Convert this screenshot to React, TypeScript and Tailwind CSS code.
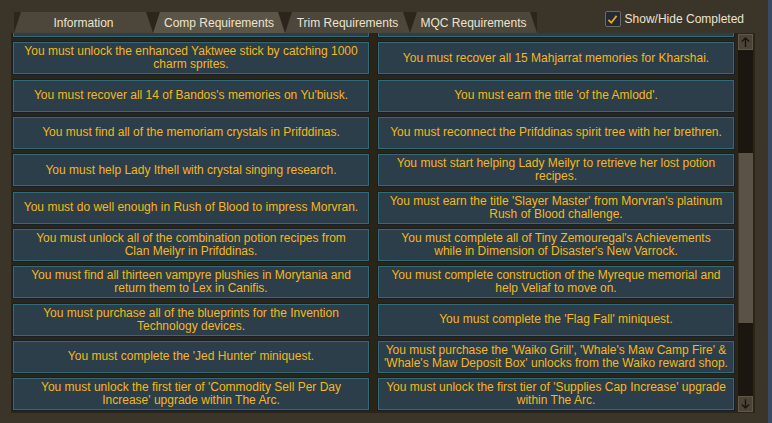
import React from "react";

type Row = [string[], string[]];

const rows: Row[] = [
  [["You must unlock the enhanced Yaktwee stick by catching 1000", "charm sprites."], ["You must recover all 15 Mahjarrat memories for Kharshai."]],
  [["You must recover all 14 of Bandos's memories on Yu'biusk."], ["You must earn the title 'of the Amlodd'."]],
  [["You must find all of the memoriam crystals in Prifddinas."], ["You must reconnect the Prifddinas spirit tree with her brethren."]],
  [["You must help Lady Ithell with crystal singing research."], ["You must start helping Lady Meilyr to retrieve her lost potion", "recipes."]],
  [["You must do well enough in Rush of Blood to impress Morvran."], ["You must earn the title 'Slayer Master' from Morvran's platinum", "Rush of Blood challenge."]],
  [["You must unlock all of the combination potion recipes from", "Clan Meilyr in Prifddinas."], ["You must complete all of Tiny Zemouregal's Achievements", "while in Dimension of Disaster's New Varrock."]],
  [["You must find all thirteen vampyre plushies in Morytania and", "return them to Lex in Canifis."], ["You must complete construction of the Myreque memorial and", "help Veliaf to move on."]],
  [["You must purchase all of the blueprints for the Invention", "Technology devices."], ["You must complete the 'Flag Fall' miniquest."]],
  [["You must complete the 'Jed Hunter' miniquest."], ["You must purchase the 'Waiko Grill', 'Whale's Maw Camp Fire' &", "'Whale's Maw Deposit Box' unlocks from the Waiko reward shop."]],
  [["You must unlock the first tier of 'Commodity Sell Per Day", "Increase' upgrade within The Arc."], ["You must unlock the first tier of 'Supplies Cap Increase' upgrade", "within The Arc."]],
];

const tabs = [
  { label: "Information", width: "w-[139px]", active: false },
  { label: "Comp Requirements", width: "w-[132px]", active: true },
  { label: "Trim Requirements", width: "w-[125px]", active: false },
  { label: "MQC Requirements", width: "w-[127px]", active: false },
];

function Cell({ lines }: { lines: string[] }) {
  return (
    <div className="flex h-[34px] flex-col items-center justify-center overflow-visible border border-[#172026] bg-[#2c3e4a] text-center text-[12px] leading-[13px] text-[#f4b81a] shadow-[inset_0_0_0_1px_#316a78]">
      {lines.map((line) => (
        <span key={line} className="whitespace-nowrap">
          {line}
        </span>
      ))}
    </div>
  );
}

function Arrow({ down }: { down?: boolean }) {
  return (
    <svg viewBox="0 0 16 16" className={`size-[14px] ${down ? "rotate-180" : ""}`} fill="none" stroke="#17120d" strokeWidth="1.6">
      <path d="M8 14V3M3.5 7.5 8 3l4.5 4.5" />
    </svg>
  );
}

export default function App() {
  return (
    <div className="flex h-[423px] w-[772px] overflow-hidden bg-[#3a4a66] font-['Liberation_Sans',Arial,sans-serif]">
      <div className="flex w-[768px] flex-col bg-[#3b3429]">
        <header className="flex h-[33px] items-start justify-between">
          <div className="ml-[14px] mt-[12px] flex h-[21px] bg-[#2c251b]">
            {tabs.map((tab) => (
              <div
                key={tab.label}
                className={`flex ${tab.width} items-center justify-center pt-[1px] text-[12px] text-[#ece3d0] [clip-path:polygon(7px_0,calc(100%-7px)_0,100%_100%,0_100%)] ${
                  tab.active ? "bg-[#5b5548]" : "bg-[#4d463a]"
                }`}
              >
                {tab.label}
              </div>
            ))}
          </div>
          <label className="mr-[24px] mt-[10px] flex items-center gap-[4px] text-[12px] text-[#ece3d0]">
            <span className="flex size-[16px] items-center justify-center rounded-[2px] border border-[#6b6d6c] bg-[#222a33]">
              <svg viewBox="0 0 16 16" className="size-[13px]" fill="none" stroke="#f3a51c" strokeWidth="2.2">
                <path d="M3 8.5 6.5 12 13 3.5" />
              </svg>
            </span>
            Show/Hide Completed
          </label>
        </header>

        <div className="ml-[11px] flex h-[380px] w-[744px] bg-[#2b2419] pl-[1px]">
          <div className="h-full w-[723px] overflow-hidden">
            <div className="-mt-[29px] grid grid-cols-2 gap-x-[7px] gap-y-[3.33px]">
              <Cell lines={[""]} />
              <Cell lines={[""]} />
              {rows.map(([left, right], i) => (
                <React.Fragment key={i}>
                  <Cell lines={left} />
                  <Cell lines={right} />
                </React.Fragment>
              ))}
              <Cell lines={[""]} />
              <Cell lines={[""]} />
            </div>
          </div>
          <div className="ml-[3px] flex w-[15px] flex-col pt-[1px]">
            <div className="flex h-[16px] items-center justify-center border border-[#5f574a] bg-[#4a4336]">
              <Arrow />
            </div>
            <div className="flex flex-1 flex-col bg-[#1c1610]">
              <div className="h-[103px]" />
              <div className="h-[170px] border-l border-[#3f382d] bg-[#5a5245]" />
            </div>
            <div className="mb-[1px] flex h-[16px] items-center justify-center border border-[#5f574a] bg-[#4a4336]">
              <Arrow down />
            </div>
          </div>
        </div>
      </div>
    </div>
  );
}
